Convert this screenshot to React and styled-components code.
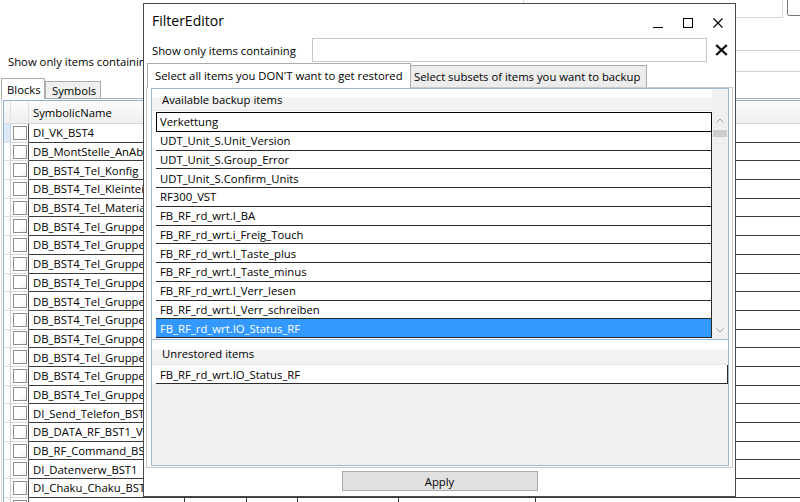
import React from "react";
import styled, { createGlobalStyle, css } from "styled-components";

const FONT = `"Open Sans", "Noto Sans", "Liberation Sans", sans-serif`;

const GlobalStyle = createGlobalStyle`
  * { box-sizing: border-box; }
  html, body { margin: 0; padding: 0; background: #fff; }
  body { font-family: ${FONT}; font-size: 11.3px; color: #000; }
`;

const Screen = styled.div`
  position: relative;
  width: 800px;
  height: 502px;
  overflow: hidden;
  background: #fff;
`;

/* ---------- background main window ---------- */
const MainWindow = styled.div`
  display: flex;
  flex-direction: column;
  height: 100%;
`;

const TopStrip = styled.div`
  display: flex;
  justify-content: flex-end;
  align-items: flex-start;
  height: 18px;
  gap: 4px;
`;

const TopField = styled.div`
  width: 260px;
  height: 18px;
  border: 1px solid #d9d9d9;
  border-top: none;
`;

const TopButton = styled.div`
  width: 30px;
  height: 19px;
  margin-top: -3px;
  margin-right: -17px;
  border: 1px solid #7a7a7a;
  border-radius: 2px;
  background: #fdfdfd;
`;

const FilterRow = styled.div`
  display: flex;
  align-items: center;
  height: 22px;
  margin-top: 32px;
  padding-left: 8px;
`;

const FilterLabel = styled.span`
  white-space: nowrap;
  width: 152px;
`;

const FilterField = styled.div`
  flex: 1;
  height: 22px;
  margin-right: -4px;
  border: 1px solid #d0d0d0;
`;

const TabStrip = styled.div`
  display: flex;
  align-items: flex-end;
  height: 20px;
  margin-top: 6px;
  padding-left: 1px;
`;

const MainTab = styled.div`
  width: ${(p) => p.$w}px;
  height: ${(p) => (p.$active ? "21px" : "17px")};
  margin-bottom: ${(p) => (p.$active ? "-1px" : "0")};
  padding-left: ${(p) => p.$pad}px;
  display: flex;
  align-items: center;
  border: 1px solid #acacac;
  border-bottom: none;
  background: ${(p) => (p.$active ? "#fff" : "#f0f0f0")};
  position: relative;
  z-index: ${(p) => (p.$active ? 1 : 0)};
  white-space: nowrap;
`;

const GridPanel = styled.div`
  flex: 1;
  margin-left: 1px;
  padding: 1px 0 0 1px;
  border-top: 1px solid #acacac;
  border-left: 1px solid #d9d9d9;
  overflow: hidden;
`;

const DataGrid = styled.div`
  border-top: 1px solid #8fb0d2;
  border-left: 1px solid #8fb0d2;
  height: 100%;
  overflow: hidden;
`;

const COLS = "7px 18px 156px 62px 51px 101px 137px 400px";

const GridRow = styled.div`
  display: grid;
  grid-template-columns: ${COLS};
  height: ${(p) => (p.$header ? "23px" : "18.7px")};
  background: ${(p) => (p.$header ? "linear-gradient(#fbfbfb, #efefef)" : "#fff")};
`;

const HeadCell = styled.div`
  display: flex;
  align-items: center;
  padding-left: 4px;
  border-right: 1px solid #e0e0e0;
  border-bottom: 1px solid #d5d5d5;
  white-space: nowrap;
  overflow: hidden;
`;

const RowHeadCell = styled.div`
  border-right: 1px solid #c3cfdc;
  border-bottom: 1px solid #dedede;
  background: ${(p) => (p.$current ? "#dbe9f7" : "#fff")};
`;

const CheckCell = styled.div`
  display: flex;
  align-items: center;
  justify-content: center;
  border-right: 1px solid #4a4a4a;
  border-bottom: 1px solid #d6d6d6;
`;

const CheckBox = styled.span`
  width: 14px;
  height: 14px;
  border: 1px solid #8e8e8e;
  background: linear-gradient(135deg, #fff 60%, #f1f1f1);
`;

const DataCell = styled.div`
  display: flex;
  align-items: center;
  padding-left: 4px;
  border-right: 1px solid #3a3a3a;
  border-bottom: 1px solid #3a3a3a;
  white-space: nowrap;
  overflow: hidden;
`;

/* ---------- dialog ---------- */
const Dialog = styled.section`
  position: absolute;
  left: 143px;
  top: 3px;
  width: 593px;
  height: 494px;
  border: 1px solid #4a4a4a;
  background: #fff;
  display: flex;
  flex-direction: column;
  z-index: 5;
`;

const TitleBar = styled.div`
  height: 34px;
  flex: none;
  display: flex;
  align-items: flex-start;
  padding: 0 2px 0 8px;
`;

const Title = styled.div`
  flex: 1;
  font-size: 14px;
  line-height: 34px;
`;

const WinButton = styled.div`
  width: 30px;
  height: 30px;
  margin-top: 4px;
  display: flex;
  align-items: center;
  justify-content: center;
  svg {
    display: block;
  }
`;

const DlgFilterRow = styled.div`
  height: 24px;
  flex: none;
  display: grid;
  grid-template-columns: 160px 1fr 28px;
  align-items: center;
  padding-left: 8px;
`;

const DlgField = styled.div`
  height: 24px;
  border: 1px solid #c8c8c8;
  background: #fff;
`;

const ClearButton = styled.div`
  display: flex;
  align-items: center;
  justify-content: center;
  height: 24px;
`;

const DlgTabs = styled.div`
  height: 24px;
  flex: none;
  margin-top: 1px;
  display: flex;
  align-items: flex-end;
  padding-left: 3px;
`;

const DlgTab = styled.div`
  width: ${(p) => p.$w}px;
  height: ${(p) => (p.$active ? "25px" : "22px")};
  margin-bottom: ${(p) => (p.$active ? "-1px" : "0")};
  padding-left: ${(p) => p.$pad}px;
  padding-bottom: ${(p) => (p.$active ? "2px" : "0")};
  display: flex;
  align-items: center;
  border: 1px solid #acacac;
  border-bottom: none;
  ${(p) => !p.$active && css`border-left: none;`}
  background: ${(p) => (p.$active ? "#fff" : "#ececec")};
  position: relative;
  z-index: ${(p) => (p.$active ? 1 : 0)};
  white-space: nowrap;
`;

const TabPanel = styled.div`
  flex: 1;
  margin: 0 2px;
  border: 1px solid #c9c9c9;
  background: #fff;
  padding: 0 3px 1px 4px;
  display: flex;
  min-height: 0;
`;

const Frame = styled.div`
  flex: 1;
  border: 1px solid #9db9d6;
  display: flex;
  flex-direction: column;
  min-height: 0;
`;

const AvailableSection = styled.div`
  height: 251px;
  flex: none;
  display: flex;
  border-bottom: 1px solid #9db9d6;
`;

const ListColumn = styled.div`
  flex: 1;
  display: flex;
  flex-direction: column;
`;

const ColumnHeader = styled.div`
  height: ${(p) => p.$h}px;
  flex: none;
  display: flex;
  align-items: center;
  padding-left: 10px;
  padding-top: ${(p) => p.$pt || 0}px;
  background: linear-gradient(#fff 0%, #fff 35%, #f3f3f3 45%, #f3f3f3 100%);
  border-bottom: 1px solid #e4e4e4;
  white-space: nowrap;
`;

const ListBody = styled.div`
  flex: 1;
  padding: 1px 0 0 4px;
  background: #fff;
`;

const ListRow = styled.div`
  height: ${(p) => (p.$focused ? "19.75px" : "18.75px")};
  display: flex;
  align-items: center;
  padding-left: ${(p) => (p.$focused ? "3px" : "4px")};
  border-right: 1px solid #2a2a2a;
  border-bottom: 1px solid #2a2a2a;
  ${(p) =>
    p.$focused &&
    css`
      border: 1px solid #000;
    `}
  background: ${(p) => (p.$selected ? "#3399ff" : "#fff")};
  color: ${(p) => (p.$selected ? "#fff" : "#000")};
  white-space: nowrap;
`;

const ScrollColumn = styled.div`
  width: 16px;
  flex: none;
  display: flex;
  flex-direction: column;
  background: #f0f0f0;
`;

const HeaderFiller = styled.div`
  height: 22px;
  flex: none;
  background: #f0f0f0;
`;

const ScrollButton = styled.div`
  height: ${(p) => p.$h}px;
  flex: none;
  display: flex;
  align-items: center;
  justify-content: center;
`;

const ScrollTrack = styled.div`
  flex: 1;
`;

const Thumb = styled.div`
  height: 7px;
  margin: 0 1px;
  background: #cdcdcd;
`;

const UnrestoredSection = styled.div`
  flex: 1;
  display: flex;
  flex-direction: column;
  background: #f0f0f0;
`;

const SingleRowWrap = styled.div`
  padding-left: 4px;
  background: #fff;
  flex: none;
`;

const UnrestoredRow = styled.div`
  height: 19px;
  display: flex;
  align-items: center;
  padding-left: 4px;
  border-right: 1px solid #2a2a2a;
  border-bottom: 1px solid #2a2a2a;
  white-space: nowrap;
`;

const Footer = styled.div`
  height: 28px;
  flex: none;
  display: flex;
  justify-content: center;
  padding-top: 3px;
`;

const ApplyButton = styled.button`
  width: 196px;
  height: 20px;
  padding: 0;
  border: 1px solid #adadad;
  background: #e1e1e1;
  font-family: ${FONT};
  font-size: 11.3px;
  color: #000;
`;

/* ---------- icons ---------- */
const MinIcon = () => (
  <svg width="10" height="10" viewBox="0 0 10 10" shapeRendering="crispEdges">
    <path d="M0 9.5H10" stroke="#000" strokeWidth="1" fill="none" />
  </svg>
);
const MaxIcon = () => (
  <svg width="10" height="10" viewBox="0 0 10 10" shapeRendering="crispEdges">
    <rect x="0.5" y="0.5" width="9" height="9" stroke="#000" strokeWidth="1" fill="none" />
  </svg>
);
const CloseIcon = () => (
  <svg width="10" height="10" viewBox="0 0 10 10">
    <path d="M0.5 0.5L9.5 9.5M9.5 0.5L0.5 9.5" stroke="#000" strokeWidth="1.1" fill="none" />
  </svg>
);
const BoldX = () => (
  <svg width="13" height="12" viewBox="0 0 13 12">
    <path d="M1.2 1L11.8 11M11.8 1L1.2 11" stroke="#111" strokeWidth="2.4" fill="none" />
  </svg>
);
const Chevron = ({ up }) => (
  <svg width="8" height="5" viewBox="0 0 8 5">
    <path
      d={up ? "M0.5 4.5L4 1L7.5 4.5" : "M0.5 0.5L4 4L7.5 0.5"}
      stroke="#9a9a9a"
      strokeWidth="1"
      fill="none"
    />
  </svg>
);

/* ---------- data ---------- */
const symbols = [
  "DI_VK_BST4",
  "DB_MontStelle_AnAbwahl",
  "DB_BST4_Tel_Konfig",
  "DB_BST4_Tel_Kleinteil",
  "DB_BST4_Tel_Material",
  "DB_BST4_Tel_Gruppe_1",
  "DB_BST4_Tel_Gruppe_2",
  "DB_BST4_Tel_Gruppe_3",
  "DB_BST4_Tel_Gruppe_4",
  "DB_BST4_Tel_Gruppe_5",
  "DB_BST4_Tel_Gruppe_6",
  "DB_BST4_Tel_Gruppe_7",
  "DB_BST4_Tel_Gruppe_8",
  "DB_BST4_Tel_Gruppe_9",
  "DB_BST4_Tel_Gruppe_10",
  "DI_Send_Telefon_BST4",
  "DB_DATA_RF_BST1_VST",
  "DB_RF_Command_BST1",
  "DI_Datenverw_BST1",
  "DI_Chaku_Chaku_BST1",
  "",
];

const backupItems = [
  "Verkettung",
  "UDT_Unit_S.Unit_Version",
  "UDT_Unit_S.Group_Error",
  "UDT_Unit_S.Confirm_Units",
  "RF300_VST",
  "FB_RF_rd_wrt.I_BA",
  "FB_RF_rd_wrt.i_Freig_Touch",
  "FB_RF_rd_wrt.I_Taste_plus",
  "FB_RF_rd_wrt.I_Taste_minus",
  "FB_RF_rd_wrt.I_Verr_lesen",
  "FB_RF_rd_wrt.I_Verr_schreiben",
  "FB_RF_rd_wrt.IO_Status_RF",
];

export default function App() {
  return (
    <Screen>
      <GlobalStyle />
      <MainWindow>
        <TopStrip>
          <TopField />
          <TopButton />
        </TopStrip>
        <FilterRow>
          <FilterLabel>Show only items containing</FilterLabel>
          <FilterField />
        </FilterRow>
        <TabStrip>
          <MainTab $active $w={44} $pad={5}>
            Blocks
          </MainTab>
          <MainTab $w={56} $pad={6}>
            Symbols
          </MainTab>
        </TabStrip>
        <GridPanel>
          <DataGrid>
            <GridRow $header>
              <HeadCell />
              <HeadCell />
              <HeadCell>SymbolicName</HeadCell>
              <HeadCell />
              <HeadCell />
              <HeadCell />
              <HeadCell />
              <HeadCell />
            </GridRow>
            {symbols.map((name, i) => (
              <GridRow key={i}>
                <RowHeadCell $current={i === 0} />
                <CheckCell>
                  <CheckBox />
                </CheckCell>
                <DataCell>{name}</DataCell>
                <DataCell />
                <DataCell />
                <DataCell />
                <DataCell />
                <DataCell />
              </GridRow>
            ))}
          </DataGrid>
        </GridPanel>
      </MainWindow>

      <Dialog>
        <TitleBar>
          <Title>FilterEditor</Title>
          <WinButton>
            <MinIcon />
          </WinButton>
          <WinButton>
            <MaxIcon />
          </WinButton>
          <WinButton>
            <CloseIcon />
          </WinButton>
        </TitleBar>
        <DlgFilterRow>
          <span>Show only items containing</span>
          <DlgField />
          <ClearButton>
            <BoldX />
          </ClearButton>
        </DlgFilterRow>
        <DlgTabs>
          <DlgTab $active $w={264} $pad={7}>
            Select all items you DON'T want to get restored
          </DlgTab>
          <DlgTab $w={236} $pad={3}>
            Select subsets of items you want to backup
          </DlgTab>
        </DlgTabs>
        <TabPanel>
          <Frame>
            <AvailableSection>
              <ListColumn>
                <ColumnHeader $h={22}>Available backup items</ColumnHeader>
                <ListBody>
                  {backupItems.map((item, i) => (
                    <ListRow
                      key={item}
                      $focused={i === 0}
                      $selected={i === backupItems.length - 1}
                    >
                      {item}
                    </ListRow>
                  ))}
                </ListBody>
              </ListColumn>
              <ScrollColumn>
                <HeaderFiller />
                <ScrollButton $h={19}>
                  <Chevron up />
                </ScrollButton>
                <Thumb />
                <ScrollTrack />
                <ScrollButton $h={18}>
                  <Chevron />
                </ScrollButton>
              </ScrollColumn>
            </AvailableSection>
            <UnrestoredSection>
              <ColumnHeader $h={25} $pt={3}>
                Unrestored items
              </ColumnHeader>
              <SingleRowWrap>
                <UnrestoredRow>FB_RF_rd_wrt.IO_Status_RF</UnrestoredRow>
              </SingleRowWrap>
            </UnrestoredSection>
          </Frame>
        </TabPanel>
        <Footer>
          <ApplyButton>Apply</ApplyButton>
        </Footer>
      </Dialog>
    </Screen>
  );
}
